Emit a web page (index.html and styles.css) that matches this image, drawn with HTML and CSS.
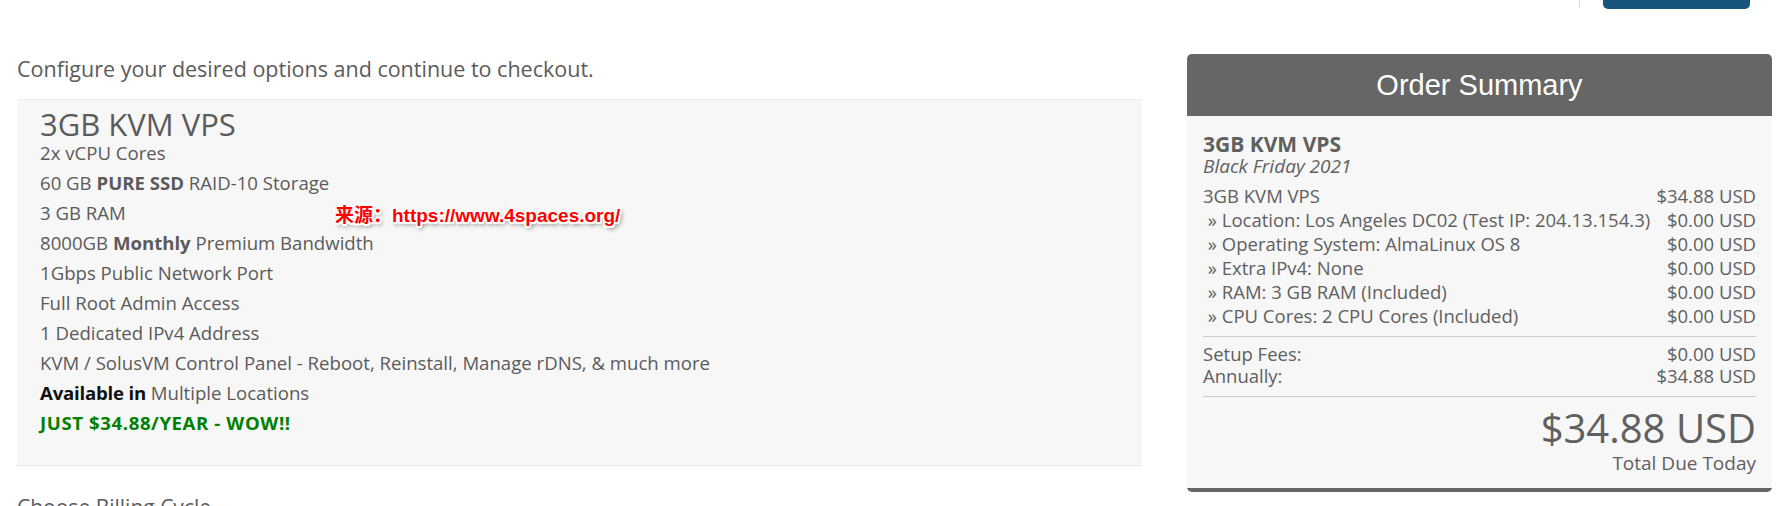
FILE: index.html
```html
<!DOCTYPE html>
<html lang="en">
<head>
<meta charset="utf-8">
<title>Configure</title>
<link rel="stylesheet" href="styles.css">
</head>
<body>
<div class="topbar">
  <span class="divider-v"></span>
  <span class="top-btn"></span>
</div>
<div class="page">
  <main class="main-col">
    <p class="intro">Configure your desired options and continue to checkout.</p>
    <section class="product-box">
      <h2 class="product-name">3GB KVM VPS</h2>
      <ul class="features">
        <li>2x vCPU Cores</li>
        <li>60 GB <b>PURE SSD</b> RAID-10 Storage</li>
        <li>3 GB RAM</li>
        <li>8000GB <b>Monthly</b> Premium Bandwidth</li>
        <li>1Gbps Public Network Port</li>
        <li>Full Root Admin Access</li>
        <li>1 Dedicated IPv4 Address</li>
        <li>KVM / SolusVM Control Panel - Reboot, Reinstall, Manage rDNS, &amp; much more</li>
        <li><b class="dark">Available in</b> Multiple Locations</li>
        <li><b class="green">JUST $34.88/YEAR - WOW!!</b></li>
      </ul>
      <div class="watermark">来源：https://www.4spaces.org/</div>
    </section>
    <p class="section-title">Choose Billing Cycle</p>
  </main>
  <aside class="summary">
    <div class="summary-head">Order Summary</div>
    <div class="summary-body">
      <div class="s-title">3GB KVM VPS</div>
      <div class="s-group">Black Friday 2021</div>
      <div class="s-rows">
        <div class="s-row"><span>3GB KVM VPS</span><span>$34.88 USD</span></div>
        <div class="s-row"><span>&nbsp;» Location: Los Angeles DC02 (Test IP: 204.13.154.3)</span><span>$0.00 USD</span></div>
        <div class="s-row"><span>&nbsp;» Operating System: AlmaLinux OS 8</span><span>$0.00 USD</span></div>
        <div class="s-row"><span>&nbsp;» Extra IPv4: None</span><span>$0.00 USD</span></div>
        <div class="s-row"><span>&nbsp;» RAM: 3 GB RAM (Included)</span><span>$0.00 USD</span></div>
        <div class="s-row"><span>&nbsp;» CPU Cores: 2 CPU Cores (Included)</span><span>$0.00 USD</span></div>
      </div>
      <div class="s-fees">
        <div class="s-row"><span>Setup Fees:</span><span>$0.00 USD</span></div>
        <div class="s-row"><span>Annually:</span><span>$34.88 USD</span></div>
      </div>
      <div class="s-total">
        <div class="s-amount">$34.88 USD</div>
        <div class="s-due">Total Due Today</div>
      </div>
    </div>
  </aside>
</div>
</body>
</html>
```
FILE: styles.css
```css
* { box-sizing: border-box; }
html, body { margin: 0; padding: 0; background: #fff; }
body {
  font-family: "Open Sans", "Noto Sans", sans-serif;
  color: #5b5b5b;
  height: 506px;
  overflow: hidden;
}
.topbar {
  height: 9px;
  display: flex;
  justify-content: flex-end;
  align-items: flex-start;
  padding-right: 41px;
}
.divider-v {
  width: 1px;
  height: 8px;
  background: #ddd;
  margin-right: 23px;
}
.top-btn {
  width: 147px;
  height: 9px;
  background: #17557c;
  border-radius: 0 0 5px 5px;
}
.page {
  display: flex;
  padding-left: 17px;
  gap: 45px;
  align-items: flex-start;
}
.main-col {
  width: 1125px;
  flex: none;
}
.intro {
  margin: 48px 0 0;
  font-size: 21.5px;
  line-height: 24px;
}
.product-box {
  position: relative;
  margin-top: 18px;
  background: #f7f7f7;
  border-top: 1px solid #eee;
  border-bottom: 1px solid #e8e8e8;
  padding: 10px 23px 27px;
}
.product-name {
  margin: 0;
  font-weight: 400;
  font-size: 31px;
  line-height: 28px;
}
.features {
  list-style: none;
  margin: 0;
  padding: 0;
  font-size: 18.6px;
  line-height: 30px;
}
.features b { font-weight: 700; }
.features .dark { color: #111; letter-spacing: -0.2px; }
.features .green { color: #008000; letter-spacing: 0.6px; }
.watermark {
  position: absolute;
  left: 318px;
  top: 104px;
  font-family: "Liberation Sans", "Noto Sans CJK SC", sans-serif;
  font-weight: 700;
  font-size: 19px;
  line-height: 24px;
  color: #f00;
  text-shadow: -1.5px -1.5px 0 #fff, 1.5px -1.5px 0 #fff, -1.5px 1.5px 0 #fff, 1.5px 1.5px 0 #fff, 0 2px 0 #fff, 2px 0 0 #fff, -2px 0 0 #fff, 0 -2px 0 #fff, 2px 3px 4px #666;
}
.section-title {
  margin: 29px 0 0;
  font-size: 21px;
  line-height: 24px;
}
.summary {
  width: 585px;
  flex: none;
  margin-top: 45px;
  border-radius: 5px;
  border-bottom: 4px solid #666;
  overflow: hidden;
}
.summary-head {
  background: #666;
  color: #fff;
  height: 62px;
  display: flex;
  align-items: center;
  justify-content: center;
  font-family: "Liberation Sans", Arial, sans-serif;
  font-size: 29px;
}
.summary-body {
  background: #f7f7f7;
  padding: 17px 16px 14px;
  font-size: 18.5px;
  color: #606060;
}
.s-title {
  font-weight: 700;
  font-size: 21px;
  line-height: 22px;
}
.s-group {
  font-style: italic;
  font-size: 19px;
  line-height: 22px;
}
.s-rows {
  margin-top: 7px;
  padding-bottom: 8px;
  border-bottom: 1px solid #ccc;
  line-height: 24px;
}
.s-row {
  display: flex;
  justify-content: space-between;
  white-space: pre;
}
.s-fees {
  padding: 6px 0 9px;
  border-bottom: 1px solid #ccc;
  line-height: 22px;
}
.s-total {
  text-align: right;
  padding-top: 7px;
}
.s-amount {
  font-size: 40px;
  line-height: 48px;
}
.s-due {
  font-size: 19px;
  line-height: 22px;
}
```
